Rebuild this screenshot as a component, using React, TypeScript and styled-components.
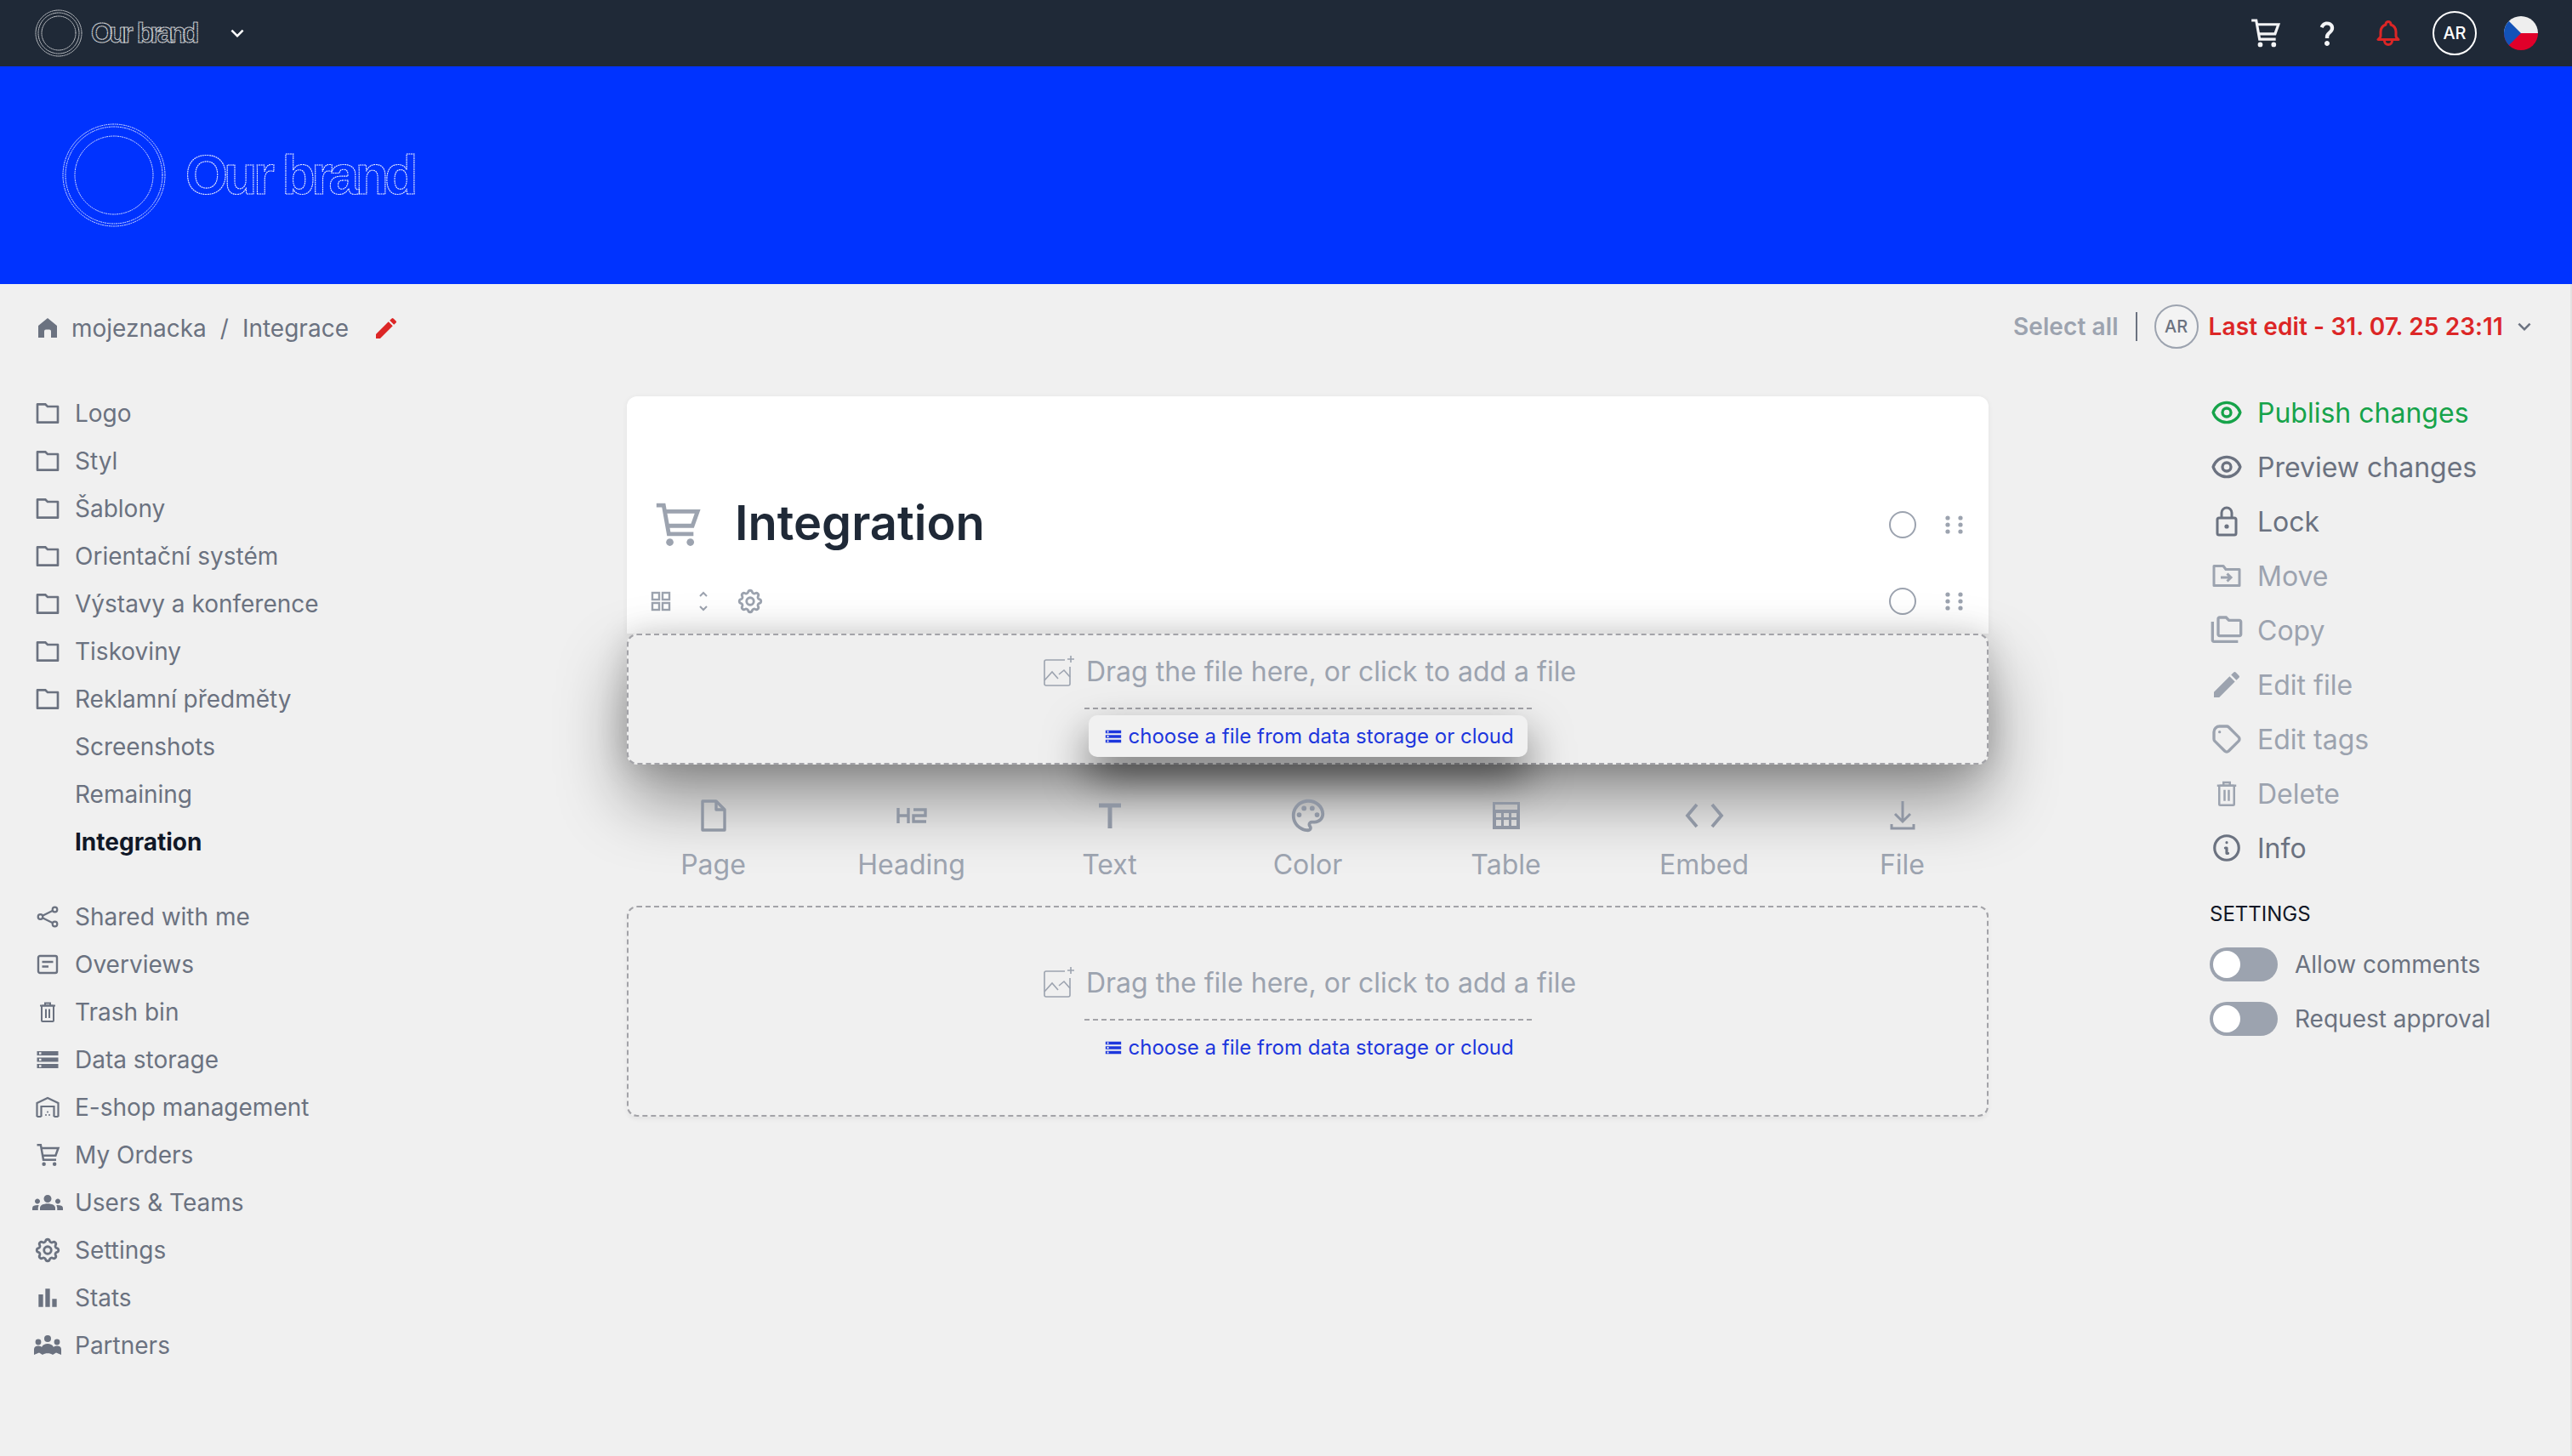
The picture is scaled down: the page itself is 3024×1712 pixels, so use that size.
import React from 'react';
import styled, { createGlobalStyle } from 'styled-components';
import { RiFolderLine } from 'react-icons/ri';
import { MdStorage, MdEdit, MdBarChart, MdGroups, MdOutlineFolderCopy, MdOutlinePalette, MdKeyboardArrowDown, MdQuestionMark } from 'react-icons/md';
import { HiOutlineEye, HiOutlineCog, HiOutlineInformationCircle, HiOutlineBell, HiOutlineTag } from 'react-icons/hi';

const Global = createGlobalStyle`
  html, body { margin: 0; padding: 0; background: #f0f0f0; }
  body { font-family: Inter, "Noto Sans", sans-serif; color: #6b7280; }
  * { box-sizing: border-box; }
`;

const Page = styled.div`
  width: 3024px;
  height: 1712px;
  overflow: hidden;
  display: flex;
  flex-direction: column;
  background: #f0f0f0;
`;
const TopBar = styled.header`
  height: 78px;
  flex: none;
  background: #1f2937;
  display: flex;
  align-items: center;
  justify-content: space-between;
  padding: 0 40px;
`;
const BrandButton = styled.div`
  display: flex;
  align-items: center;
  gap: 22px;
  color: #fff;
`;
const TopActions = styled.div`
  display: flex;
  align-items: center;
  color: #f3f4f6;
`;
const TopAction = styled.span<{ $w: number; $gap: number; $color?: string }>`
  width: ${p => p.$w}px;
  margin-left: ${p => p.$gap}px;
  display: flex;
  justify-content: center;
  color: ${p => p.$color || 'inherit'};
`;
const Avatar = styled.span<{ $light?: boolean }>`
  width: 52px;
  height: 52px;
  flex: none;
  border-radius: 50%;
  display: flex;
  align-items: center;
  justify-content: center;
  font-size: 20px;
  font-weight: 500;
  border: 2px solid ${p => (p.$light ? '#fff' : '#9ca3af')};
  color: ${p => (p.$light ? '#fff' : '#6b7280')};
  background: ${p => (p.$light ? 'transparent' : '#f3f3f3')};
`;
const Hero = styled.section`
  height: 256px;
  flex: none;
  background: #0033ff;
  display: flex;
  align-items: center;
  padding-left: 72px;
`;
const Workspace = styled.div`
  flex: 1;
  display: flex;
  flex-direction: column;
  border-right: 2px solid #e2e2e2;
`;
const Crumbs = styled.div`
  height: 100px;
  flex: none;
  display: flex;
  align-items: center;
  justify-content: space-between;
  padding: 4px 39px 0 45px;
`;
const CrumbPath = styled.div`
  display: flex;
  align-items: center;
  font-size: 28px;
  color: #6b7280;
`;
const CrumbHome = styled.span`
  display: flex;
  margin: -2px 17px 0 0;
  color: #6b7280;
`;
const CrumbSep = styled.span`
  margin: 0 16px;
`;
const CrumbEdit = styled.span`
  display: flex;
  margin-left: 28px;
  color: #dc2626;
`;
const EditInfo = styled.div`
  display: flex;
  align-items: center;
  font-size: 28px;
  font-weight: 600;
  letter-spacing: 0.1px;
  margin-top: -4px;
`;
const SelectAll = styled.span`
  color: #9ca3af;
`;
const VBar = styled.span`
  width: 2px;
  height: 34px;
  background: #6b7280;
  margin: 0 20px;
`;
const LastEdit = styled.span`
  color: #dc2626;
  margin-left: 12px;
`;
const EditChevron = styled.span`
  display: flex;
  color: #6b7280;
  margin-left: 10px;
`;
const Columns = styled.div`
  display: grid;
  grid-template-columns: 737px 1601px 1fr;
  flex: 1;
`;
const Sidebar = styled.nav`
  padding: 24px 0 0 36px;
  display: flex;
  flex-direction: column;
  gap: 32px;
`;
const NavList = styled.div`
  display: flex;
  flex-direction: column;
`;
const NavRow = styled.div<{ $active?: boolean }>`
  height: 56px;
  display: flex;
  align-items: center;
  gap: 12px;
  font-size: 28px;
  font-weight: ${p => (p.$active ? 700 : 400)};
  color: ${p => (p.$active ? '#111827' : '#6b7280')};
`;
const NavIcon = styled.span`
  width: 40px;
  height: 32px;
  flex: none;
  display: flex;
  align-items: center;
  justify-content: center;
  color: #6b7280;
`;
const Center = styled.main`
  padding-top: 32px;
  display: flex;
  flex-direction: column;
`;
const TitleCard = styled.section`
  height: 279px;
  background: #fff;
  border-radius: 12px 12px 0 0;
  box-shadow: 0 1px 6px rgba(0, 0, 0, 0.06);
  padding-top: 111px;
`;
const TitleRow = styled.div`
  height: 80px;
  display: flex;
  align-items: center;
  padding: 0 28px 0 30px;
`;
const TitleIcon = styled.span`
  display: flex;
  color: #9ca3af;
  margin-right: 39px;
`;
const Title = styled.h1`
  margin: -4px 0 0;
  flex: 1;
  font-size: 56px;
  font-weight: 600;
  color: #1f2937;
`;
const ToolRow = styled.div`
  height: 60px;
  margin-top: 20px;
  display: flex;
  align-items: center;
  padding: 0 28px 0 28px;
  color: #9ca3af;
`;
const ToolIcons = styled.div`
  flex: 1;
  display: flex;
  align-items: center;
  gap: 31px;
`;
const ToolIcon = styled.span`
  display: flex;
`;
const Radio = styled.span`
  width: 32px;
  height: 32px;
  border-radius: 50%;
  border: 2px solid #9ca3af;
  background: #fff;
  margin-right: 33px;
`;
const Grip = styled.span`
  display: flex;
  color: #9ca3af;
`;
const Drop = styled.section<{ $raised?: boolean }>`
  height: ${p => (p.$raised ? 154 : 248)}px;
  padding-top: ${p => (p.$raised ? 18 : 64)}px;
  border: 2px dashed #a3a3a8;
  border-radius: 12px;
  display: flex;
  flex-direction: column;
  align-items: center;
  background: ${p => (p.$raised ? '#efefef' : 'transparent')};
  box-shadow: ${p =>
    p.$raised
      ? '0 40px 80px 0 rgba(0,0,0,.42), 0 0 36px rgba(0,0,0,.15)'
      : '0 3px 5px rgba(0,0,0,.05)'};
`;
const DropText = styled.div`
  height: 48px;
  display: flex;
  align-items: center;
  gap: 13px;
  padding-left: 4px;
  font-size: 32px;
  color: #9ca3af;
`;
const DropIcon = styled.span`
  display: flex;
`;
const DropRule = styled.div`
  width: 526px;
  margin-top: 19px;
  border-top: 2px dashed #a3a3a8;
`;
const CloudLink = styled.div<{ $raised?: boolean }>`
  margin-top: 7px;
  width: 516px;
  height: 49px;
  border-radius: 10px;
  display: flex;
  align-items: center;
  gap: 7px;
  padding-left: 18px;
  font-size: 24px;
  color: #1d37dd;
  background: ${p => (p.$raised ? '#f1f1f1' : 'transparent')};
  box-shadow: ${p => (p.$raised ? '0 24px 50px rgba(0,0,0,.55)' : 'none')};
`;
const Inserts = styled.div`
  height: 166px;
  display: grid;
  grid-template-columns: repeat(7, 233px);
  justify-content: center;
  padding-top: 38px;
`;
const InsertItem = styled.div`
  display: flex;
  flex-direction: column;
  align-items: center;
  color: #9ca3af;
  font-size: 32px;
`;
const InsertIcon = styled.span`
  height: 44px;
  display: flex;
  align-items: center;
  margin-bottom: 16px;
  color: #8f96a3;
`;
const Aside = styled.aside`
  padding: 19px 0 0 260px;
`;
const ActionRow = styled.div<{ $tone: 'green' | 'dark' | 'muted' }>`
  height: 64px;
  display: flex;
  align-items: center;
  gap: 16px;
  font-size: 32px;
  color: ${p => (p.$tone === 'green' ? '#16a34a' : p.$tone === 'dark' ? '#6b7280' : '#9ca3af')};
`;
const ActionIcon = styled.span`
  width: 40px;
  display: flex;
  justify-content: center;
`;
const SettingsHead = styled.h2`
  margin: 26px 0 7px;
  font-size: 24px;
  line-height: 40px;
  font-weight: 400;
  color: #111827;
`;
const ToggleRow = styled.div`
  height: 64px;
  display: flex;
  align-items: center;
  gap: 20px;
  font-size: 28px;
  color: #6b7280;
`;
const Track = styled.span`
  width: 80px;
  height: 40px;
  border-radius: 20px;
  background: #9ca3af;
  padding: 4px;
  display: flex;
`;
const Knob = styled.span`
  width: 32px;
  height: 32px;
  border-radius: 50%;
  background: #fff;
`;

const OutlineText = styled.text`
  font-family: "Liberation Sans", Arial, sans-serif;
  font-weight: 700;
  fill: none;
  stroke: #fff;
  stroke-linecap: round;
`;

const BrandMark = ({ size, fontSize, tracking, wordGap, gap, textBox, opacity, ring }: { size: number; fontSize: number; tracking: number; wordGap: number; gap: number; textBox: number; opacity: number; ring: number }) => {
  const r = size / 2;
  const dash = size > 80 ? '1 1.6' : '1 1.2';
  const w = size + gap + textBox;
  return (
    <svg width={w} height={size + 2} viewBox={`0 0 ${w} ${size + 2}`} aria-label="Our brand">
      <g fill="none" stroke="#fff" strokeWidth={1} strokeDasharray={dash} strokeLinecap="round" opacity={opacity}>
        <circle cx={r + 1} cy={r + 1} r={r - 1} />
        <circle cx={r + 1} cy={r + 1} r={r - 4} />
        <circle cx={r + 1} cy={r + 1} r={ring} />
      </g>
      <OutlineText x={size + gap} y={r + fontSize * 0.36} fontSize={fontSize} strokeWidth={1.1} strokeDasharray={dash} opacity={opacity} letterSpacing={tracking} wordSpacing={wordGap}>
        Our brand
      </OutlineText>
    </svg>
  );
};

const Cart = ({ size, sw = 2 }: { size: number; sw?: number }) => (
  <svg width={size} height={size} viewBox="0 0 24 24" fill="none" stroke="currentColor" strokeWidth={sw} strokeLinecap="butt" strokeLinejoin="miter">
    <path d="M2 2.5H5.5L8 16.5H20" />
    <path d="M6 5.5H22L19.5 12.5H7.2" />
    <circle cx="8.5" cy="20.5" r="1.8" fill="currentColor" stroke="none" />
    <circle cx="18.5" cy="20.5" r="1.8" fill="currentColor" stroke="none" />
  </svg>
);
const GripDots = () => (
  <svg width="24" height="22" viewBox="0 0 24 22" fill="currentColor">
    {[3, 11, 19].flatMap(y => [4, 19].map(x => <circle key={`${x}-${y}`} cx={x} cy={y} r="2.6" />))}
  </svg>
);
const HomeIcon = () => (
  <svg width="22" height="24" viewBox="0 0 22 24" fill="currentColor">
    <path d="M11 1L22 10V24H15V16.5A2 2 0 0 0 13 14.5H9A2 2 0 0 0 7 16.5V24H0V10Z" />
  </svg>
);
const ShareIcon = () => (
  <svg width="26" height="26" viewBox="0 0 26 26" fill="none" stroke="currentColor" strokeWidth="2.2">
    <circle cx="21.5" cy="4.5" r="2.8" />
    <circle cx="4.5" cy="13" r="2.8" />
    <circle cx="21.5" cy="21.5" r="2.8" />
    <path d="M7 11.7L19 5.8M7 14.3L19 20.2" />
  </svg>
);
const BinIcon = ({ w, h }: { w: number; h: number }) => (
  <svg width={w} height={h} viewBox="0 0 18 24" fill="none" stroke="currentColor" strokeWidth="2">
    <path d="M0 4.5H18M6 4.5V1.5H12V4.5" />
    <rect x="2" y="4.5" width="14" height="18.5" rx="1" />
    <path d="M7 8.5V19M11 8.5V19" />
  </svg>
);
const OverviewIcon = () => (
  <svg width="26" height="26" viewBox="0 0 26 26" fill="none" stroke="currentColor" strokeWidth="2.4">
    <rect x="2" y="3" width="22" height="20" rx="2" />
    <path d="M6.5 10H19.5M6.5 15.5H14" />
  </svg>
);
const Warehouse = () => (
  <svg width="28" height="26" viewBox="0 0 28 26" fill="none" stroke="currentColor" strokeWidth="2.2">
    <path d="M1.5 24V8L14 2L26.5 8V24" />
    <path d="M6.5 24V12H21.5V24" />
    <path d="M1.5 24H6.5M21.5 24H26.5" />
    <circle cx="12" cy="22" r="1" fill="currentColor" stroke="none" />
    <circle cx="16" cy="22" r="1" fill="currentColor" stroke="none" />
    <circle cx="14" cy="18.5" r="1" fill="currentColor" stroke="none" />
  </svg>
);
const PartnersIcon = () => (
  <svg width="32" height="24" viewBox="0 0 32 24" fill="currentColor">
    <circle cx="16" cy="4" r="4" />
    <circle cx="5" cy="8" r="3.4" />
    <circle cx="27" cy="8" r="3.4" />
    <path d="M0 23V16.5C0 14 2 12.5 5 12.5C7.5 12.5 8.5 13.5 9 14C10.5 11 13 10 16 10C19 10 21.5 11 23 14C23.5 13.5 24.5 12.5 27 12.5C30 12.5 32 14 32 16.5V23L26 20.5L22 23C19 20.5 13 20.5 10 23L6 20.5Z" />
  </svg>
);
const Lock = () => (
  <svg width="26" height="36" viewBox="0 0 26 36" fill="none" stroke="currentColor" strokeWidth="3">
    <rect x="2" y="14" width="22" height="20" rx="2" />
    <path d="M7 14V8a6 6 0 0 1 12 0V14" />
    <circle cx="13" cy="24" r="2.6" fill="currentColor" stroke="none" />
  </svg>
);
const MoveIcon = () => (
  <svg width="34" height="28" viewBox="0 0 34 28" fill="none" stroke="currentColor" strokeWidth="3">
    <path d="M2 25.5V2.5H13L16 6.5H32V25.5Z" strokeLinejoin="round" />
    <path d="M10 16H22M17.5 11.5L22 16L17.5 20.5" />
  </svg>
);
const PageIcon = () => (
  <svg width="30" height="38" viewBox="0 0 30 38" fill="none" stroke="currentColor" strokeWidth="3.4" strokeLinejoin="round">
    <path d="M2 2H18L28 12V36H2Z" />
    <path d="M18 2V12H28" />
  </svg>
);
const HeadingIcon = () => (
  <svg width="36" height="20" viewBox="0 0 36 20" fill="none" stroke="currentColor" strokeWidth="3.4">
    <path d="M2 1V19M2 10H14M14 1V19" />
    <path d="M20 3H34V10H20V17H35" />
  </svg>
);
const TextIcon = () => (
  <svg width="26" height="30" viewBox="0 0 26 30" fill="none" stroke="currentColor" strokeWidth="5">
    <path d="M0 3H26M13 3V30" />
  </svg>
);
const EmbedIcon = () => (
  <svg width="46" height="30" viewBox="0 0 46 30" fill="none" stroke="currentColor" strokeWidth="3.8">
    <path d="M14 2L3 15L14 28M32 2L43 15L32 28" />
  </svg>
);
const FileIcon = () => (
  <svg width="30" height="34" viewBox="0 0 30 34" fill="none" stroke="currentColor" strokeWidth="3">
    <path d="M15 0V23M6 15L15 24L24 15" />
    <path d="M2 27V32H28V27" />
  </svg>
);
const TableIcon = () => (
  <svg width="32" height="34" viewBox="0 0 32 34" fill="currentColor">
    <path fillRule="evenodd" d="M0 1h32v32H0zM3 4v6h26V4zM4 14v5h6v-5zM13 14v5h6v-5zM22 14v5h6v-5zM4 22v7h6v-7zM13 22v7h6v-7zM22 22v7h6v-7z" />
  </svg>
);
const ImageAdd = () => (
  <svg width="38" height="38" viewBox="0 0 38 38" fill="none" stroke="currentColor" strokeWidth="1.6">
    <path d="M26 6H4a2 2 0 0 0-2 2v26a2 2 0 0 0 2 2h26a2 2 0 0 0 2-2V14" />
    <path d="M2 30L11 20L18 28M19 23L25 18L32 26" />
    <path d="M33 1V9M29 5H37" />
  </svg>
);
const GridIcon = () => (
  <svg width="24" height="24" viewBox="0 0 24 24" fill="none" stroke="currentColor" strokeWidth="2.4">
    <rect x="2" y="2" width="8" height="8" />
    <rect x="14" y="2" width="8" height="8" />
    <rect x="2" y="14" width="8" height="8" />
    <rect x="14" y="14" width="8" height="8" />
  </svg>
);
const UpDown = () => (
  <svg width="14" height="24" viewBox="0 0 14 24" fill="none" stroke="currentColor" strokeWidth="2">
    <path d="M3 6L7 2L11 6M3 18L7 22L11 18" />
  </svg>
);
const Flag = () => (
  <svg width="40" height="40" viewBox="0 0 40 40">
    <defs>
      <clipPath id="flag-clip"><circle cx="20" cy="20" r="20" /></clipPath>
    </defs>
    <g clipPath="url(#flag-clip)">
      <rect width="40" height="20" fill="#eeeeee" />
      <rect y="20" width="40" height="20" fill="#e0002a" />
      <path d="M0 0L20 20L0 40Z" fill="#1252b8" />
    </g>
  </svg>
);

const folders = ['Logo', 'Styl', 'Šablony', 'Orientační systém', 'Výstavy a konference', 'Tiskoviny', 'Reklamní předměty'];
const subPages = ['Screenshots', 'Remaining'];
const navItems: [string, React.ReactNode][] = [
  ['Shared with me', <ShareIcon />],
  ['Overviews', <OverviewIcon />],
  ['Trash bin', <BinIcon w={18} h={24} />],
  ['Data storage', <MdStorage size={30} />],
  ['E-shop management', <Warehouse />],
  ['My Orders', <Cart size={30} />],
  ['Users & Teams', <MdGroups size={36} />],
  ['Settings', <HiOutlineCog size={34} />],
  ['Stats', <MdBarChart size={32} />],
  ['Partners', <PartnersIcon />],
];
const inserts: [string, React.ReactNode][] = [
  ['Page', <PageIcon />],
  ['Heading', <HeadingIcon />],
  ['Text', <TextIcon />],
  ['Color', <MdOutlinePalette size={46} />],
  ['Table', <TableIcon />],
  ['Embed', <EmbedIcon />],
  ['File', <FileIcon />],
];
const actions: ['green' | 'dark' | 'muted', string, React.ReactNode][] = [
  ['green', 'Publish changes', <HiOutlineEye size={40} />],
  ['dark', 'Preview changes', <HiOutlineEye size={40} />],
  ['dark', 'Lock', <Lock />],
  ['muted', 'Move', <MoveIcon />],
  ['muted', 'Copy', <MdOutlineFolderCopy size={40} />],
  ['muted', 'Edit file', <MdEdit size={40} />],
  ['muted', 'Edit tags', <HiOutlineTag size={40} />],
  ['muted', 'Delete', <BinIcon w={24} h={30} />],
  ['dark', 'Info', <HiOutlineInformationCircle size={38} />],
];

const DropZone = ({ raised }: { raised?: boolean }) => (
  <Drop $raised={raised}>
    <DropText>
      <DropIcon><ImageAdd /></DropIcon>
      Drag the file here, or click to add a file
    </DropText>
    <DropRule />
    <CloudLink $raised={raised}>
      <MdStorage size={22} />
      choose a file from data storage or cloud
    </CloudLink>
  </Drop>
);

export default function App() {
  return (
    <Page>
      <Global />
      <TopBar>
        <BrandButton>
          <BrandMark size={56} fontSize={33} tracking={-4.5} wordGap={4} gap={11} textBox={135} opacity={0.8} ring={20} />
          <MdKeyboardArrowDown size={30} />
        </BrandButton>
        <TopActions>
          <TopAction $w={38} $gap={0}><Cart size={38} /></TopAction>
          <TopAction $w={36} $gap={36}><MdQuestionMark size={36} /></TopAction>
          <TopAction $w={36} $gap={36} $color="#dc2626"><HiOutlineBell size={38} /></TopAction>
          <TopAction $w={52} $gap={34}><Avatar $light>AR</Avatar></TopAction>
          <TopAction $w={40} $gap={32}><Flag /></TopAction>
        </TopActions>
      </TopBar>
      <Hero>
        <BrandMark size={122} fontSize={64} tracking={-4.5} wordGap={0} gap={24} textBox={282} opacity={0.9} ring={46} />
      </Hero>
      <Workspace>
        <Crumbs>
          <CrumbPath>
            <CrumbHome><HomeIcon /></CrumbHome>
            mojeznacka<CrumbSep>/</CrumbSep>Integrace
            <CrumbEdit><MdEdit size={32} /></CrumbEdit>
          </CrumbPath>
          <EditInfo>
            <SelectAll>Select all</SelectAll>
            <VBar />
            <Avatar>AR</Avatar>
            <LastEdit>Last edit - 31. 07. 25 23:11</LastEdit>
            <EditChevron><MdKeyboardArrowDown size={30} /></EditChevron>
          </EditInfo>
        </Crumbs>
        <Columns>
          <Sidebar>
            <NavList>
              {folders.map(f => (
                <NavRow key={f}><NavIcon><RiFolderLine size={32} /></NavIcon>{f}</NavRow>
              ))}
              {subPages.map(f => (
                <NavRow key={f}><NavIcon />{f}</NavRow>
              ))}
              <NavRow $active><NavIcon />Integration</NavRow>
            </NavList>
            <NavList>
              {navItems.map(([label, icon]) => (
                <NavRow key={label}><NavIcon>{icon}</NavIcon>{label}</NavRow>
              ))}
            </NavList>
          </Sidebar>
          <Center>
            <TitleCard>
              <TitleRow>
                <TitleIcon><Cart size={58} sw={2} /></TitleIcon>
                <Title>Integration</Title>
                <Radio />
                <Grip><GripDots /></Grip>
              </TitleRow>
              <ToolRow>
                <ToolIcons>
                  <ToolIcon><GridIcon /></ToolIcon>
                  <ToolIcon><UpDown /></ToolIcon>
                  <ToolIcon><HiOutlineCog size={34} /></ToolIcon>
                </ToolIcons>
                <Radio />
                <Grip><GripDots /></Grip>
              </ToolRow>
            </TitleCard>
            <DropZone raised />
            <Inserts>
              {inserts.map(([label, icon]) => (
                <InsertItem key={label}><InsertIcon>{icon}</InsertIcon>{label}</InsertItem>
              ))}
            </Inserts>
            <DropZone />
          </Center>
          <Aside>
            {actions.map(([tone, label, icon]) => (
              <ActionRow key={label} $tone={tone}><ActionIcon>{icon}</ActionIcon>{label}</ActionRow>
            ))}
            <SettingsHead>SETTINGS</SettingsHead>
            <ToggleRow><Track><Knob /></Track>Allow comments</ToggleRow>
            <ToggleRow><Track><Knob /></Track>Request approval</ToggleRow>
          </Aside>
        </Columns>
      </Workspace>
    </Page>
  );
}
